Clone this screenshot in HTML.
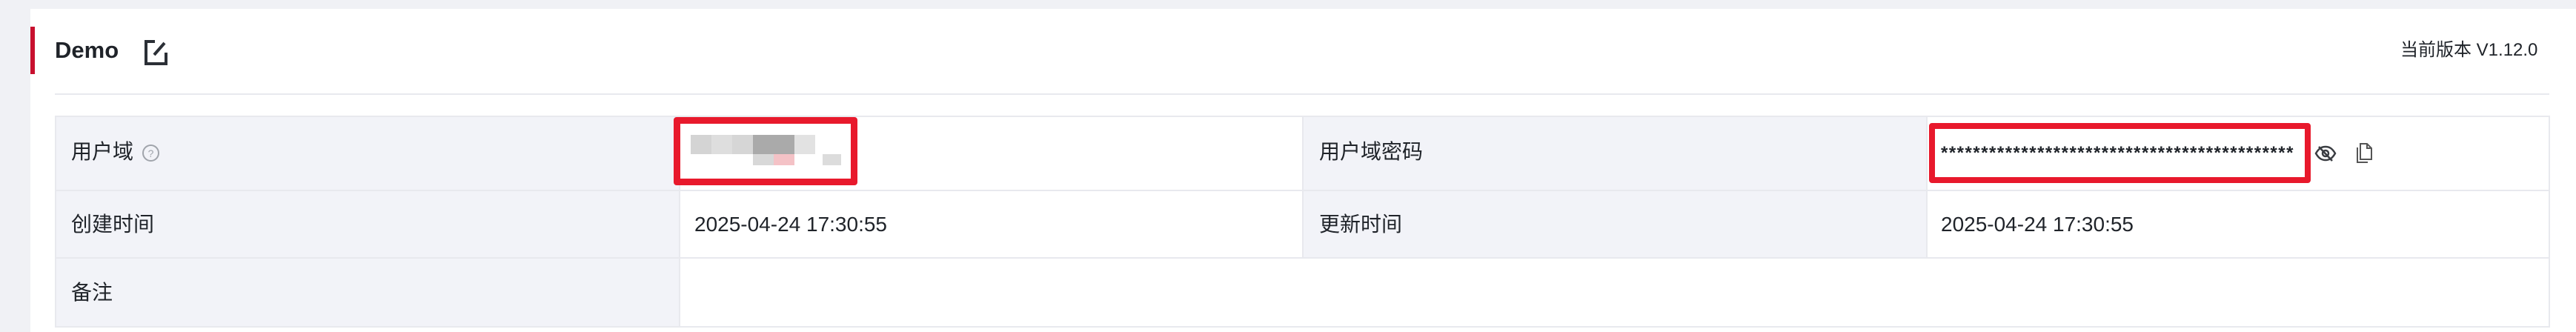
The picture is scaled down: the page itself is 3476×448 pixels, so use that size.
<!DOCTYPE html>
<html><head><meta charset="utf-8"><style>
*{margin:0;padding:0;box-sizing:border-box}
body{width:3476px;height:448px;background:#f0f1f5;position:relative;overflow:hidden;font-family:"Liberation Sans","Noto Sans CJK SC",sans-serif;color:#1f2329}
.a{position:absolute}
.card{left:41px;top:12px;width:3435px;height:436px;background:#fff}
.lbl{background:#f2f3f8}
.t{font-size:28px;line-height:28px;white-space:nowrap}
.hl{height:2px;background:#e8e9ee}
.vl{width:2px;background:#e8e9ee}
.box{border:9px solid #e8192c;border-radius:4px}
</style></head><body>
<div class="a card"></div>
<div class="a" style="left:41px;top:36px;width:6px;height:64px;background:#c8102e"></div>
<div class="a" style="left:74px;top:50px;font-size:31px;font-weight:bold;line-height:36px">Demo</div>
<svg class="a" style="left:193px;top:50px" width="36" height="40" viewBox="0 0 36 40"><path d="M16 6H4v30h27V21" fill="none" stroke="#2b2f36" stroke-width="4"/><path d="M15 24L29 8" stroke="#2b2f36" stroke-width="4"/></svg>
<div class="a" style="left:3239px;top:55px;font-size:24px;line-height:26px;color:#1f2329">当前版本 V1.12.0</div>
<div class="a hl" style="left:74px;top:126px;width:3366px"></div>

<div class="a lbl" style="left:74px;top:156px;width:843px;height:285px"></div>
<div class="a lbl" style="left:1758px;top:156px;width:842px;height:192px"></div>
<div class="a hl" style="left:74px;top:156px;width:3366px"></div>
<div class="a hl" style="left:74px;top:256px;width:3366px"></div>
<div class="a hl" style="left:74px;top:347px;width:3366px"></div>
<div class="a hl" style="left:74px;top:440px;width:3366px"></div>
<div class="a vl" style="left:74px;top:156px;height:286px"></div>
<div class="a vl" style="left:916px;top:156px;height:286px"></div>
<div class="a vl" style="left:1757px;top:156px;height:192px"></div>
<div class="a vl" style="left:2599px;top:156px;height:192px"></div>
<div class="a vl" style="left:3439px;top:156px;height:286px"></div>

<div class="a t" style="left:96px;top:191px">用户域</div>
<svg class="a" style="left:191px;top:194px" width="25" height="25" viewBox="0 0 25 25"><circle cx="12.5" cy="12.5" r="10.5" fill="none" stroke="#a0a4ab" stroke-width="2"/><text x="12.5" y="18" font-size="14" text-anchor="middle" fill="#a0a4ab" font-family="Liberation Sans">?</text></svg>
<div class="a t" style="left:96px;top:289px">创建时间</div>
<div class="a t" style="left:96px;top:381px">备注</div>
<div class="a t" style="left:1780px;top:191px">用户域密码</div>
<div class="a t" style="left:1780px;top:289px">更新时间</div>
<div class="a t" style="left:937px;top:289px">2025-04-24 17:30:55</div>
<div class="a t" style="left:2619px;top:289px">2025-04-24 17:30:55</div>

<div class="a" style="left:932px;top:182px;width:28px;height:26px;background:#d4d4d4"></div>
<div class="a" style="left:960px;top:182px;width:28px;height:26px;background:#dedede"></div>
<div class="a" style="left:988px;top:182px;width:28px;height:26px;background:#d6d6d6"></div>
<div class="a" style="left:1016px;top:182px;width:56px;height:26px;background:#aaaaaa"></div>
<div class="a" style="left:1072px;top:182px;width:28px;height:26px;background:#e2e2e2"></div>
<div class="a" style="left:1016px;top:208px;width:28px;height:15px;background:#d8d8d8"></div>
<div class="a" style="left:1044px;top:208px;width:28px;height:15px;background:#f4c2c6"></div>
<div class="a" style="left:1110px;top:208px;width:25px;height:15px;background:#dcdcdc"></div>
<div class="a box" style="left:909px;top:158px;width:248px;height:92px"></div>

<div class="a box" style="left:2603px;top:166px;width:515px;height:81px;border-width:8px"></div>
<div class="a" style="left:2619px;top:195px;font-size:24px;line-height:24px;letter-spacing:1.5px;font-weight:bold;white-space:nowrap">********************************************</div>
<svg class="a" style="left:3123px;top:195px" width="30" height="24" viewBox="0 0 30 24"><path d="M2 12C6 5 10 3 15 3s9 2 13 9c-4 7-8 9-13 9S6 19 2 12z" fill="none" stroke="#3a3d42" stroke-width="2.5"/><circle cx="15" cy="12" r="4" fill="none" stroke="#3a3d42" stroke-width="2.5"/><path d="M6 3L24 22" stroke="#3a3d42" stroke-width="2.5"/></svg>
<svg class="a" style="left:3177px;top:191px" width="26" height="30" viewBox="0 0 26 30"><path d="M8 3h9l6 6v15H8z" fill="none" stroke="#555" stroke-width="2"/><path d="M17 3v6h6" fill="none" stroke="#555" stroke-width="2"/><path d="M4 8v20h14" fill="none" stroke="#555" stroke-width="2"/></svg>
</body></html>
